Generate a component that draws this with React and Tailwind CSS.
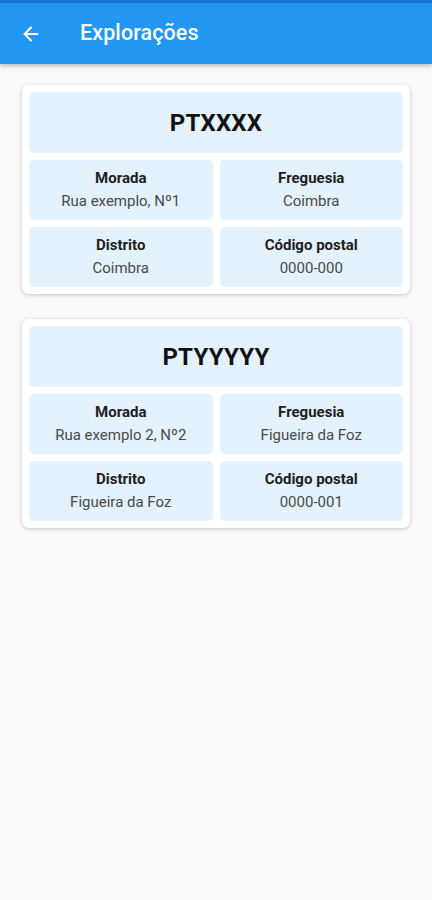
import React from 'react';
import { ArrowLeft } from 'lucide-react';

const exploracoes = [
  {
    codigo: 'PTXXXX',
    morada: 'Rua exemplo, Nº1',
    freguesia: 'Coimbra',
    distrito: 'Coimbra',
    codigoPostal: '0000-000',
  },
  {
    codigo: 'PTYYYYY',
    morada: 'Rua exemplo 2, Nº2',
    freguesia: 'Figueira da Foz',
    distrito: 'Figueira da Foz',
    codigoPostal: '0000-001',
  },
];

function Field({ label, value }) {
  return (
    <div className="h-[60px] rounded-[5px] bg-[#e3f2fd] flex flex-col items-center justify-center">
      <p className="text-[15px] leading-[21px] font-bold text-[#1e1e1e]">{label}</p>
      <p className="text-[15px] leading-[24px] text-[#4a4a4a]">{value}</p>
    </div>
  );
}

function ExploracaoCard({ item }) {
  return (
    <div className="rounded-[7px] bg-white p-[7px] shadow-[0_1px_4px_rgba(0,0,0,0.22)] flex flex-col gap-[7px]">
      <div className="h-[61px] rounded-[5px] bg-[#e3f2fd] flex items-center justify-center">
        <h2 className="text-[24px] font-bold text-[#111] tracking-[0.2px]">{item.codigo}</h2>
      </div>
      <div className="grid grid-cols-2 gap-[7px]">
        <Field label="Morada" value={item.morada} />
        <Field label="Freguesia" value={item.freguesia} />
        <Field label="Distrito" value={item.distrito} />
        <Field label="Código postal" value={item.codigoPostal} />
      </div>
    </div>
  );
}

export default function App() {
  return (
    <div className="min-h-[900px] bg-[#fafafa]" style={{ fontFamily: 'Roboto, "Noto Sans", sans-serif' }}>
      <div className="h-[3px] bg-[#1976d2]" />
      <header className="h-[61px] bg-[#2196f3] flex items-center shadow-[0_2px_4px_rgba(0,0,0,0.25)] relative">
        <button className="w-[62px] h-full flex items-center justify-center text-white">
          <ArrowLeft className="w-[22px] h-[22px]" strokeWidth={2.2} />
        </button>
        <h1 className="ml-[18px] text-[21.5px] font-medium text-white tracking-[0.1px]">Explorações</h1>
      </header>
      <main className="px-[22px] pt-[21px] flex flex-col gap-[25px]">
        {exploracoes.map((item) => (
          <ExploracaoCard key={item.codigo} item={item} />
        ))}
      </main>
    </div>
  );
}
